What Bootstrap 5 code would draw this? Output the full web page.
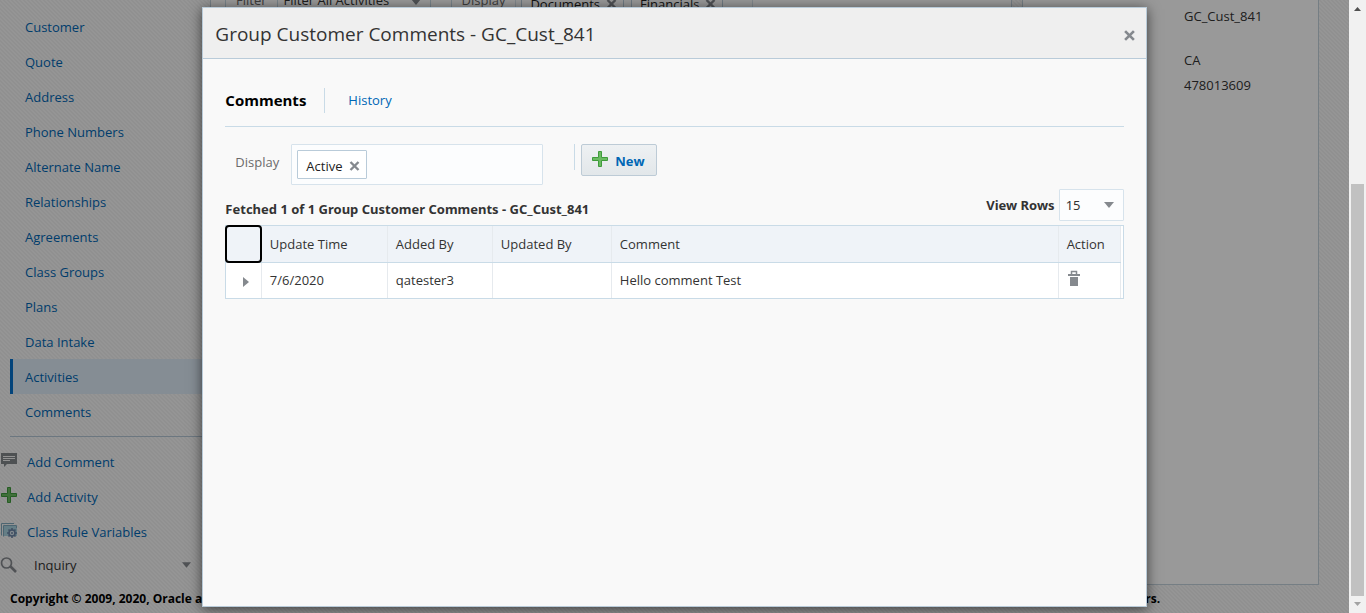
<!DOCTYPE html>
<html lang="en">
<head>
<meta charset="utf-8">
<meta name="viewport" content="width=device-width, initial-scale=1">
<title>Group Customer Comments</title>
<link href="https://cdn.jsdelivr.net/npm/bootstrap@5.3.0/dist/css/bootstrap.min.css" rel="stylesheet">
<style>
  :root { --ink: #333; --link: #0067b5; --line: #c9dbe7; --frame: #b9cbd9; }
  body { font: 13px/20px "Open Sans", "Noto Sans", sans-serif; color: var(--ink); height: 100vh; }
  a { color: var(--link); }
  .plain-btn { border: 0; background: none; padding: 0; line-height: 0; }
  .app-page { background: linear-gradient(45deg, #f8f8f8 25%, #f1f1f1 25% 50%, #f8f8f8 50% 75%, #f1f1f1 75%) 0 0 / 4px 4px; }
  .side-menu { width: 202px; padding-top: 9px; }
  .side-menu .nav-link { height: 35px; padding: 8px 0 7px 12px; margin-left: 10px; border-left: 3px solid transparent; color: var(--link); }
  .side-menu .nav-link.active { background: #deecf7; border-color: #0572ce; }
  .menu-rule { margin: 7px 0 7px 10px; border-top: 1px solid #b5c7d5; }
  .task-link { height: 35px; gap: 10px; color: var(--link); }
  .inquiry-btn { height: 31px; gap: 17px; padding: 0 11px 0 0; color: var(--ink); }
  .panel-box { background: #fff; border: 1px solid #c4d3dc; border-top: 0; }
  .main-panel { margin-left: 8px; margin-right: 10px; padding: 0 14px; }
  .detail-panel { width: 297px; margin-right: 30px; padding: 6px 0 0 161px; height: 585px; color: #333; }
  .detail-panel .zip-line { margin-top: 5px; }
  .filter-bar { margin-top: -18px; height: 40px; }
  .bar-group { border-left: 1px solid var(--line); padding-left: 10px; margin-right: 20px; }
  .bar-group .bar-label { padding: 8px 10px 0 0; color: #666; }
  .pick-select { width: 154px; height: 36px; border: 1px solid var(--line); padding: 0 6px; background: #fff; color: var(--ink); }
  .chip-box { border: 1px solid #d7e3ec; background: #fcfdfe; padding: 5px; gap: 7px; }
  .chip-box.wide-box { width: 238px; }
  .chip { height: 29px; background: #fff; border: 1px solid var(--frame); border-radius: 1px; padding: 2px 6px 0 7px; gap: 6px; color: #222; }
  .wide-box .chip { padding-left: 8px; padding-right: 6px; gap: 6px; }
  .page-foot { font-size: 12px; font-weight: 700; color: #000; height: 28px; padding: 4px 0 0 10px; margin: 0; width: 86%; }
  .dim { background: rgba(0, 0, 0, .4); }
  .scroll-strip { width: 17px; background: #f1f1f1; padding-top: 7px; padding-bottom: 7px; }
  .scroll-thumb { width: 13px; margin: 173px 0 6px; background: #c1c1c1; }
  .comment-dialog { width: 70%; top: 7px; bottom: 6px; margin: 0 auto; background: #f9f9f9; border: 1px solid var(--frame); box-shadow: 0 2px 12px rgba(0, 0, 0, .6); }
  .dialog-head { height: 51px; background: #efefef; border-bottom: 1px solid var(--frame); padding: 2px 11px 0 12px; }
  .dialog-head h1 { font-size: 19px; line-height: 28px; font-weight: 400; margin: 0; }
  .dialog-head .plain-btn { padding-top: 2px; }
  .dialog-body { padding: 22px; }
  .tab-row { height: 46px; padding-bottom: 6px; border-bottom: 1px solid var(--line); }
  .tab-row .tab-on { font-size: 15px; font-weight: 700; color: #000; padding: 0 18px 2px 0; }
  .tab-row .tab-off { height: 25px; line-height: 25px; border-left: 1px solid var(--line); padding-left: 23px; }
  .tool-row { padding-top: 17px; }
  .tool-label { width: 66px; padding: 8px 0 0 10px; color: #6b6b6b; }
  .chip-field { width: 252px; height: 41px; border-radius: 1px; }
  .chip-field .chip { padding-left: 8px; }
  .new-wrap { margin-left: 31px; border-left: 1px solid var(--line); height: 26px; padding-left: 6px; }
  .new-btn { height: 32px; width: 76px; gap: 7px; border: 1px solid #bdcbd6; border-radius: 2px; background: linear-gradient(#eef1f3, #e2e7ea); color: var(--link); font-weight: 700; padding: 2px 2px 0 0; }
  .new-btn svg { margin-bottom: 2px; }
  .sum-row { height: 40px; padding: 4px 0; font-weight: 700; font-family: "Noto Sans", "Open Sans", sans-serif; }
  .sum-text { padding-bottom: 2px; }
  .rows-select { width: 65px; height: 32px; border: 1px solid #d7e3ec; border-radius: 1px; background: #fcfdfe; padding: 0 6px; color: var(--ink); }
  .select-hold { position: relative; }
  .select-hold select { appearance: none; font: inherit; font-weight: 400; }
  .select-hold svg { position: absolute; right: 10px; top: 50%; margin-top: -3px; pointer-events: none; }
  .grid-frame { border: 1px solid var(--line); background: #fff; padding-right: 2px; }
  .data-grid { table-layout: fixed; margin: 0; color: var(--ink); }
  .data-grid th, .data-grid td { font-weight: 400; padding: 0 8px; border-right: 1px solid #e6eaee; border-bottom: 0; background: #fff; color: var(--ink); box-shadow: none; vertical-align: middle; }
  .data-grid th { height: 36px; background: #eff3f8; border-bottom: 1px solid var(--line); }
  .data-grid td { height: 36px; }
  .data-grid .pick-cell { outline: 2px solid #000; outline-offset: -1px; border-radius: 3px; }
</style>
</head>
<body class="d-flex overflow-hidden">
<svg class="d-none" aria-hidden="true">
  <symbol id="i-down" viewBox="0 0 10 6"><path d="M0 0h10L5 6z" fill="#85898e"/></symbol>
  <symbol id="i-x" viewBox="0 0 10 10"><path d="M1 1l8 8M9 1L1 9" stroke="#85898e" stroke-width="2.4" fill="none"/></symbol>
  <symbol id="i-plus" viewBox="0 0 16 16"><path d="M6.5.5h3v6h6v3h-6v6h-3v-6h-6v-3h6z" fill="#6bbb62" stroke="#3f9c3c"/></symbol>
</svg>

<div class="app-page flex-grow-1 position-relative overflow-hidden d-flex flex-column">
  <div class="d-flex flex-grow-1">
    <nav class="side-menu flex-shrink-0">
      <div class="nav flex-column">
        <a class="nav-link" href="#">Customer</a>
        <a class="nav-link" href="#">Quote</a>
        <a class="nav-link" href="#">Address</a>
        <a class="nav-link" href="#">Phone Numbers</a>
        <a class="nav-link" href="#">Alternate Name</a>
        <a class="nav-link" href="#">Relationships</a>
        <a class="nav-link" href="#">Agreements</a>
        <a class="nav-link" href="#">Class Groups</a>
        <a class="nav-link" href="#">Plans</a>
        <a class="nav-link" href="#">Data Intake</a>
        <a class="nav-link active" href="#">Activities</a>
        <a class="nav-link" href="#">Comments</a>
      </div>
      <div class="menu-rule"></div>
      <a class="task-link d-flex align-items-center text-decoration-none" href="#">
        <svg width="17" height="20" viewBox="0 0 17 20"><path d="M1 1h16v11H7l-3 3v-3H1z" fill="#83878b"/><path d="M3 4.500h12M3 6.500h12M3 8.500h7" stroke="#f4f4f4"/></svg>Add Comment</a>
      <a class="task-link d-flex align-items-center text-decoration-none" href="#">
        <svg width="17" height="20" viewBox="0 0 17 20"><use href="#i-plus" x="1" y="0" width="16" height="16"/></svg>Add Activity</a>
      <a class="task-link d-flex align-items-center text-decoration-none" href="#">
        <svg width="17" height="20" viewBox="0 0 17 20"><path d="M1.500 13.500V1.500H14" fill="none" stroke="#7fa9bd"/><path d="M4 4h13v10H4z" fill="#a9d3e0"/><path d="M3.500 14.500V3.500H16.500V6" fill="none" stroke="#7fa9bd"/><circle cx="12" cy="11" r="3" fill="#d9e5ee" stroke="#6b84a5" stroke-width="1.600"/><path d="M12 6v2M12 14v2M7 11h2M15 11h2M8.500 7.500l1.400 1.400M14.100 13.100l1.400 1.400M15.500 7.500l-1.400 1.400M9.900 13.100l-1.400 1.400" stroke="#6b84a5" stroke-width="1.600"/><circle cx="12" cy="11" r="1" fill="#6b84a5"/></svg>Class Rule Variables</a>
      <button class="inquiry-btn plain-btn d-flex align-items-center w-100" type="button">
        <svg width="17" height="16" viewBox="0 0 17 16"><circle cx="6.500" cy="6" r="5" fill="none" stroke="#85898e" stroke-width="1.700"/><path d="M10.500 9.500l5.500 5.500" stroke="#85898e" stroke-width="2.600"/></svg>
        <span class="flex-grow-1 text-start">Inquiry</span>
        <svg width="9" height="6"><use href="#i-down" width="9" height="6"/></svg>
      </button>
    </nav>
    <main class="main-panel panel-box flex-grow-1">
      <div class="filter-bar d-flex">
        <div class="bar-group d-flex">
          <label class="bar-label" for="filter">Filter</label>
          <span class="select-hold"><select class="pick-select" id="filter"><option>Filter All Activities</option></select><svg width="10" height="6"><use href="#i-down"/></svg></span>
        </div>
        <div class="bar-group d-flex">
          <span class="bar-label">Display</span>
          <div class="chip-box wide-box d-flex">
            <span class="chip d-flex align-items-center">Documents <button class="plain-btn" type="button" aria-label="Remove Documents"><svg width="11" height="10"><use href="#i-x"/></svg></button></span>
            <span class="chip d-flex align-items-center">Financials <button class="plain-btn" type="button" aria-label="Remove Financials"><svg width="11" height="10"><use href="#i-x"/></svg></button></span>
          </div>
        </div>
      </div>
    </main>
    <aside class="detail-panel panel-box flex-shrink-0">
      <div>GC_Cust_841</div>
      <div class="mt-4">CA</div>
      <div class="zip-line">478013609</div>
    </aside>
  </div>
  <p class="page-foot d-flex justify-content-between text-nowrap"><span>Copyright © 2009, 2020, Oracle and/or its affiliates. All rights reserved.</span><span>Other names may be trademarks of their respective owners.</span></p>

  <div class="dim position-absolute top-0 start-0 w-100 h-100"></div>

  <section class="comment-dialog position-absolute start-0 end-0" role="dialog" aria-labelledby="dialog-title">
    <header class="dialog-head d-flex align-items-center justify-content-between">
      <h1 id="dialog-title">Group Customer Comments - GC_Cust_841</h1>
      <button class="plain-btn" type="button" aria-label="Close"><svg width="11" height="11" viewBox="0 0 10 10"><use href="#i-x"/></svg></button>
    </header>
    <div class="dialog-body">
      <div class="tab-row d-flex align-items-center">
        <a class="tab-on text-decoration-none" href="#">Comments</a>
        <a class="tab-off text-decoration-none" href="#">History</a>
      </div>
      <div class="tool-row d-flex">
        <span class="tool-label">Display</span>
        <div class="chip-box chip-field d-flex">
          <span class="chip d-flex align-items-center">Active <button class="plain-btn" type="button" aria-label="Remove Active"><svg width="11" height="10"><use href="#i-x"/></svg></button></span>
        </div>
        <div class="new-wrap">
          <button class="new-btn d-flex align-items-center justify-content-center" type="button"><svg width="16" height="20" viewBox="0 0 16 20"><use href="#i-plus" y="1" width="16" height="16"/></svg>New</button>
        </div>
      </div>
      <div class="sum-row d-flex justify-content-between align-items-end">
        <span class="sum-text">Fetched 1 of 1 Group Customer Comments - GC_Cust_841</span>
        <div class="d-flex align-items-center gap-1">
          <label for="rows">View Rows</label>
          <span class="select-hold"><select class="rows-select" id="rows"><option>15</option></select><svg width="10" height="6"><use href="#i-down"/></svg></span>
        </div>
      </div>
      <div class="grid-frame">
        <table class="data-grid table">
          <colgroup><col style="width:35px"><col style="width:126px"><col style="width:105px"><col style="width:119px"><col><col style="width:62px"></colgroup>
          <thead><tr><th class="pick-cell"></th><th>Update Time</th><th>Added By</th><th>Updated By</th><th>Comment</th><th>Action</th></tr></thead>
          <tbody><tr>
            <td class="text-end pe-2"><button class="plain-btn" type="button" aria-label="Expand"><svg width="12" height="12" viewBox="0 0 12 12"><path d="M2 1l6 5-6 5z" fill="#85898e"/></svg></button></td>
            <td>7/6/2020</td><td>qatester3</td><td></td><td>Hello comment Test</td>
            <td><button class="plain-btn" type="button" aria-label="Delete"><svg width="14" height="22" viewBox="0 0 14 22"><path d="M1 4h12v2H1zM3 7h8v9H3z" fill="#85898e"/><path d="M4.500 4V1.500h5V4" fill="none" stroke="#85898e" stroke-width="1.500"/></svg></button></td>
          </tr></tbody>
        </table>
      </div>
    </div>
  </section>
</div>

<div class="scroll-strip flex-shrink-0 d-flex flex-column align-items-center" aria-hidden="true">
  <svg width="7" height="4"><path d="M0 4h7L3.500 0z" fill="#505050"/></svg>
  <div class="scroll-thumb flex-grow-1"></div>
  <svg width="7" height="4"><path d="M0 0h7L3.500 4z" fill="#a3a3a3"/></svg>
</div>
<script src="https://cdn.jsdelivr.net/npm/bootstrap@5.3.0/dist/js/bootstrap.bundle.min.js"></script>
</body>
</html>
